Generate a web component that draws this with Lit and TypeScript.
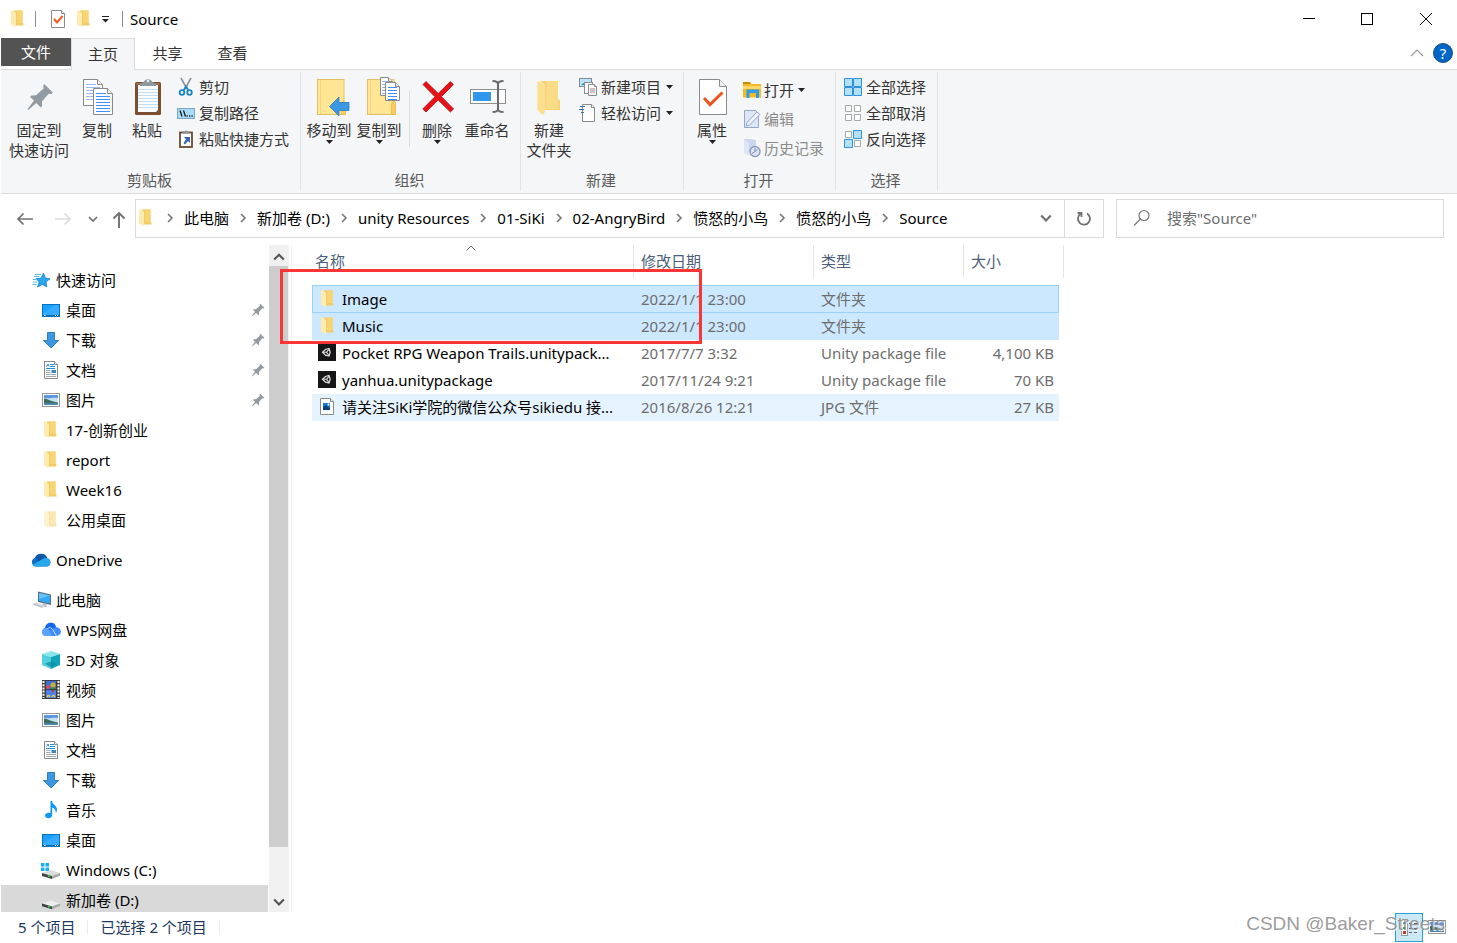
import { LitElement, html, svg, css, nothing } from "lit";
import { customElement } from "lit/decorators.js";
import { classMap } from "lit/directives/class-map.js";

type Shape = ReturnType<typeof svg>;

const draw = (w: number, h: number, shape: Shape, cls = "icon") =>
  html`<svg class=${cls} width=${w} height=${h} viewBox="0 0 ${w} ${h}" aria-hidden="true">${shape}</svg>`;

const ruled = (x: number, y: number, w: number, n: number, step: number, color: string) =>
  Array.from({ length: n }, (_, i) => svg`<path d="M${x} ${y + i * step}h${w}" stroke=${color} stroke-width="1"/>`);

const page = (x: number, y: number, w: number, h: number, fold: number) => svg`
  <path d="M${x} ${y}h${w - fold}l${fold} ${fold}v${h - fold}h${-w}z" fill="#fff" stroke="#8a8a8a"/>
  <path d="M${x + w - fold} ${y}v${fold}h${fold}" fill="#f0f0f0" stroke="#8a8a8a"/>`;

const pinShape = svg`<path d="M10.3 33.4L17 24.6 13 20.9 14.5 19.6 19 19.3 26.6 12.4 26.2 9.4 27.5 8.3 35.8 16.6 34.6 17.9 31.7 17.7 25 25.2 25.2 30 23.8 31.4 19.3 27 11.6 33.7z" fill="#919ba1"/>`;

/* Small 20px glyphs shared by the sidebar, the file list and the bars */
const folder20 = svg`
  <path d="M6 1.500h8.500v12.500l1 .5v2H6z" fill="#f3cb66"/>
  <path d="M9 1.500h5.500v12.500h-5.500z" fill="#f7d573"/>
  <path d="M3 1.500H5l3 2.500v14L3 15.800z" fill="#fdebb0"/>`;

const glyphs: Record<string, Shape> = {
  folder: folder20,
  folderPale: svg`<g opacity=".55">${folder20}</g>`,
  star: svg`
    <path d="M12.500 3l1.800 5 4.700.8-3.900 3 .6 5.200-4.200-2.600L6.500 17l1.700-5L5 8.600l5-.4z" fill="#2aa5f0" stroke="#1583c8" stroke-width=".8"/>
    <path d="M4 4.500h6M3 6.500h5M2 9.500h3M2 12h4.500M1.500 14.500h4" stroke="#5cbcf4" stroke-width="1"/>`,
  desktop: svg`
    <rect x="1.500" y="4.500" width="17" height="12" fill="#1ca1fb" stroke="#0672bd"/>
    <path d="M2 15v-2L15 5h3v10z" fill="#35abff"/>
    <path d="M2 15.500h16" stroke="#0672bd"/><path d="M3 15.500h1.500M14 15.500h1M16 15.500h1" stroke="#fff"/>`,
  download: svg`<path d="M6.500 2.500h7v8h4L10 18 2.500 10.500h4z" fill="#3c98e3" stroke="#2b7dc2"/>`,
  document: svg`
    ${page(3.5, 1.5, 13, 17, 3)}
    <path d="M5.500 6.500l1.500-2.500 1 2.500M9 4.500h4M9 6.500h5M5 8.500h9" stroke="#1e8fd8" stroke-width="1" fill="none"/>
    <rect x="10.500" y="10" width="4.500" height="3" fill="#3d88b8"/>
    <path d="M5 10.500h4.500M5 12.500h4.500M5 14.500h10M5 16.500h10" stroke="#a4aab0"/>`,
  picture: svg`
    <rect x="1.500" y="3.500" width="17" height="13" fill="#fff" stroke="#959595"/>
    <rect x="3" y="5" width="14" height="10" fill="#c3e0f7"/>
    <path d="M3 5h14v3c-4-1-9 1-14 0z" fill="#5c95e0"/>
    <path d="M3 8.500c3 0 7 3 14 4V14H3z" fill="#3f6b5b"/>
    <path d="M3 13h14v2H3z" fill="#4a86b0"/>`,
  cloud: svg`
    <path d="M4.500 16.500a4.500 4.500 0 0 1-.4-8.700A6.600 6.600 0 0 1 16.200 8.300 4.200 4.200 0 0 1 16 16.500z" fill="#0f6fc9"/>
    <path d="M4 7.800A6.600 6.600 0 0 1 16.200 8L8.500 12z" fill="#0a57a8"/>
    <path d="M1.500 15L12 8.700c2-.8 3.500-.6 4.200-.4A4.200 4.200 0 0 1 16 16.500H4.500c-1.400 0-2.400-.6-3-1.500z" fill="#28a8ea"/>`,
  computer: svg`
    <path d="M7 1.500l13 3v10.500l-13-3z" fill="#5a6b78"/>
    <path d="M8 3l11 2.500v8L8 11z" fill="#31a8f5"/>
    <path d="M8 3l11 2.500L8 9z" fill="#66c3fb"/>
    <path d="M12 13l4 1-1 1.700 1.500 1-3 .6-3-1z" fill="#b6bec4"/>
    <path d="M.5 14.200l4.500-1.600 9.500 3.200-3.500 2.200z" fill="#d3d8dc"/><path d="M3 14.500l8 2.500" stroke="#a4acb2" stroke-width=".7"/>`,
  wps: svg`
    <path d="M5 16a4.200 4.200 0 0 1-.8-8.200C5 1.500 14 1 15 7.300a4.300 4.300 0 0 1 1 8.700z" fill="#3c8dff"/>
    <path d="M4.200 7.700C5 1.500 14 1 15 7.200L9 10z" fill="#1668ee"/>
    <path d="M5 16h6L7 8.500c-2.500-1-5.800.5-6 3.700C1 14.500 2.700 16 5 16z" fill="#5ea3ff"/>
    <path d="M6.500 8.500c2.500-1.500 4.500-.5 5.500 1.500l3.500 6" fill="none" stroke="#d7e8ff" stroke-width=".9"/>`,
  cube: svg`
    <path d="M1 4l9-3 9 3-9 3z" fill="#8ae4ec"/>
    <path d="M1 4l9 3v12l-9-4z" fill="#4fd0dc"/>
    <path d="M19 4l-9 3v12l9-4z" fill="#12a5b8"/>
    <path d="M4 13.500l6-2 6 2-6 4z" fill="#0c8ba4" opacity=".7"/>`,
  video: svg`
    <rect x="1" y="0" width="18" height="19" fill="#3d3d3d"/>
    <path d="M2.500 1v17M17.500 1v17" stroke="#fff" stroke-width="2" stroke-dasharray="2 1.200"/>
    <rect x="5" y="1" width="10" height="8" fill="#3f6fd8"/><rect x="5" y="10" width="10" height="8" fill="#4a80e8"/>
    <circle cx="12" cy="5" r="2.600" fill="#c8b02c"/><path d="M5 5.500h4v3H5z" fill="#d8486a"/><path d="M10 7.500h5V9h-5z" fill="#2d8a38"/>
    <path d="M10 10h3l-1 3z" fill="#c23a2a"/><path d="M6 17c1-2 2-2 3 0M11 17c1-2 2-2 3 0" stroke="#f0d03c" stroke-width="1.500" fill="none"/>`,
  music: svg`<path d="M9.500 1h1.700c0 3.500 4.800 4.500 4.800 8.500 0 1.500-.6 2.800-1.300 3.600.4-3-1.200-4.600-3.500-5.600v7.300c0 2-1.700 3.400-3.700 3.400S4 17.200 4 15.700s1.600-2.900 3.500-2.900c.8 0 1.500.2 2 .4z" fill="#0c98f6"/>`,
  driveC: svg`
    <path d="M0 3h3.500v3.500H0zM4.500 3H8v3.500H4.500zM0 7.500h3.500V11H0zM4.500 7.500H8V11H4.500z" fill="#12b0ee"/>
    <path d="M1 13l9-3 9 3-8 3z" fill="#dcdcdc"/><path d="M1 13l10 3v3L1 16z" fill="#3f4444"/><path d="M11 16l8-3v2.800L11 19z" fill="#a9abab"/><path d="M7 15.800l2 .7" stroke="#35d435" stroke-width="1.800"/>`,
  driveD: svg`
    <path d="M1 13.500l9-3 9 3-8 3z" fill="#ededed"/><path d="M1 13.500l10 3v2.800l-10-3z" fill="#3f4444"/><path d="M11 16.500l8-3v2.500l-8 3.300z" fill="#a9abab"/><path d="M7 16.300l2 .7" stroke="#35d435" stroke-width="1.800"/>`,
  unity: svg`
    <rect x="0" y="1" width="18" height="17" fill="#161616"/>
    <path d="M4.500 9.300L7.500 6.500l3.500-1 1.200 3.800-1.200 3.800-3.500-1z" fill="none" stroke="#e0e0e0" stroke-width="1.200"/>
    <path d="M5 9.300h3.500l2.500-3M8.500 9.300l2.500 3" stroke="#e0e0e0" stroke-width="1.100" fill="none"/>`,
  jpg: svg`
    ${page(2.500, 1.500, 13, 16, 3)}
    <rect x="5" y="6" width="7" height="7" fill="#1879cf"/><path d="M5 13v-3l3-2 3 3 1-1v3z" fill="#0b3c7b"/><circle cx="10.500" cy="7.500" r="1" fill="#fff"/>`,
  check: svg`${page(2.5, 1.5, 13, 17, 3)}<path d="M5 10l3 3.500 5.500-6.500" fill="none" stroke="#f0581f" stroke-width="2"/>`,
  cut: svg`
    <path d="M4 1l6 11M14 1L8 12" stroke="#8c959b" stroke-width="1.600"/>
    <circle cx="5" cy="15.500" r="2.300" fill="none" stroke="#1b86c8" stroke-width="1.800"/><circle cx="12.500" cy="15.500" r="2.300" fill="none" stroke="#1b86c8" stroke-width="1.800"/><path d="M6.500 13.500L9 9.500l2.500 4" stroke="#1b86c8" stroke-width="1.800" fill="none"/>`,
  path: svg`
    <rect x=".5" y="5.500" width="17" height="10" fill="#a8dcff" stroke="#7fa6bf"/>
    <path d="M3 7.500l2 6M6.500 7.500l2 6" stroke="#1a1a1a" stroke-width="1.300"/><path d="M9.500 13h1.200M12 13h1.200M14.500 13h1.200" stroke="#1a1a1a" stroke-width="1.400"/>`,
  shortcut: svg`
    <rect x="3" y="3.500" width="12" height="14.500" fill="#fff" stroke="#6b4a2f" stroke-width="1.800"/>
    <path d="M5.500 4.500V2.500H8L9 1l1 1.500h2.500v2z" fill="#8a9096"/>
    <path d="M7 8h6v6l-2-2-3 3.500L6.500 14 9 10.500z" fill="#2f67b0"/>`,
  newItem: svg`
    <rect x=".5" y="1.500" width="12" height="8" fill="#bfe3f8" stroke="#7c8c96"/><path d="M2 8l4-3 5 3z" fill="#2f8bb0"/>
    <rect x="5.500" y="5.500" width="8" height="11" fill="#fff" stroke="#8a8a8a"/>
    ${page(9.5, 7.5, 8, 11, 2)}<path d="M11 11.500h5M11 13.500h5M11 15.500h5" stroke="#eab4a8"/><path d="M11 12.500h5M11 14.500h5" stroke="#a8c8ee"/>`,
  easy: svg`${page(3.5, 1.5, 12, 17, 3)}<path d="M1 3.500h5M0 6.500h5M2 9.500h3" stroke="#2e6da8" stroke-width="1.200"/>`,
  open: svg`
    <path d="M0 4V2h6l2 2h10v13.500H0z" fill="#f5b921"/><path d="M0 2h7l1 2H0z" fill="#c98c0a"/><path d="M0 6h18v3H0z" fill="#ffd766"/>
    <path d="M3.500 18V9.500h12.500V18h-3v-5H6.500v5z" fill="#2f9bea"/>`,
  edit: svg`<path d="M1.500 1.500h11l3 3v14h-14z" fill="#dce6f5" stroke="#93a7c8"/><path d="M3.500 14L14 3 17 5.500 6.500 16l-3 1z" fill="#edf2fa" stroke="#93a7c8"/>`,
  history: svg`<path d="M1 1h5l7 1v13H6l-5-1z" fill="#c9d6ee"/><path d="M1 1l5 4v13l-5-3z" fill="#dde6f7"/><circle cx="12" cy="13.500" r="5" fill="#dbe3f2" stroke="#8b9cc0" stroke-width="1.400"/><path d="M12 10V13.500l-3 2M12 13.500l2.500-2" stroke="#7f90b5" fill="none"/>`,
  selectAll: svg`<path d="M.5 1.500h8v8h-8zM9.500 1.500h8v8h-8zM.5 10.500h8v8h-8zM9.500 10.500h8v8h-8z" fill="#b5e0fc" stroke="#2f92de"/>`,
  selectNone: svg`<path d="M1.500 2.500h6v6h-6zM10.500 2.500h6v6h-6zM1.500 11.500h6v6h-6zM10.500 11.500h6v6h-6z" fill="#fff" stroke="#a8a8a8"/>`,
  invert: svg`<path d="M1.500 2.500h6v6h-6zM10.500 11.500h6v6h-6z" fill="#fff" stroke="#a8a8a8"/><path d="M9.500 1.500h8v8h-8zM.5 10.500h8v8h-8z" fill="#b5e0fc" stroke="#2f92de"/>`,
  details: svg`<rect x="2.500" y="2.500" width="6" height="16" fill="#fff" stroke="#9a9a9a"/>
    <path d="M4 5h3v2H4z" fill="#5a9"/><path d="M4 10h3v2H4z" fill="#393"/><path d="M4 14h3v3H4z" fill="#c33"/>
    <path d="M10 6.500h3M15 6.500h3M10 11.500h3M15 11.500h3M10 15.500h3M15 15.500h3" stroke="#666"/>`,
};

const glyph = (name: string) => draw(20, 20, glyphs[name]);

/* 44px ribbon artwork */
const bigFolder = svg`
  <rect x="10.500" y="3.500" width="26.500" height="35" fill="#ffe594" stroke="#e4c069"/>
  <path d="M13.500 4v34" stroke="#f6d67c"/>
  <path d="M34.500 38.500V28l2-3 2 1.500v12z" fill="#f8cd5b" stroke="#e4b84f" stroke-width=".8"/>`;

const art: Record<string, Shape> = {
  pin: pinShape,
  copy: svg`
    ${page(8.5, 3.5, 19, 26, 5)}${ruled(11, 8.5, 10, 1, 3, "#9cb8f0")}${ruled(11, 11.5, 14, 5, 3, "#9cb8f0")}
    ${page(18.5, 12.5, 19, 26, 5)}${ruled(21, 17.5, 10, 1, 3, "#3f8cff")}${ruled(21, 20.5, 14, 6, 3, "#3f8cff")}`,
  paste: svg`
    <rect x="10" y="6" width="26" height="33" rx="1.500" fill="#7b4f31"/><path d="M11 7h24v2H11z" fill="#996a47"/>
    <path d="M13 9h20v25l-2 2H13z" fill="#fbfcfd"/>${ruled(13, 13.5, 20, 7, 3, "#c3ddf0")}
    <path d="M15 10V7.500l4-1.500c.5-3.800 7.500-3.800 8 0l4 1.500V10z" fill="#8f979c"/><circle cx="23" cy="5" r="1.300" fill="#e8ecee"/>`,
  moveTo: svg`${bigFolder}<path d="M22.500 30.500L32 21v5.500h10v8H32V40z" fill="#3c98e3" stroke="#2b7dc2" stroke-width=".8"/>`,
  copyTo: svg`${bigFolder}
    ${page(23.5, 1.5, 12, 18, 4)}${ruled(25, 5.5, 6, 5, 3, "#8fb0e8")}
    ${page(28.5, 6.5, 14, 18, 4)}${ruled(31, 11.5, 9, 5, 3, "#3f8cff")}`,
  remove: svg`<path d="M11 5.500L23.200 17.500 35.400 5.500l3 3L26.400 20.700l12.200 12.200-3.200 3.100L23.200 24 11 36l-3.200-3.100L20 20.700 8 8.500z" fill="#e81216" stroke="#a80d10" stroke-width=".8"/>`,
  rename: svg`
    <rect x="5.500" y="13.500" width="35" height="14" fill="#fff" stroke="#8f8f8f"/><rect x="8" y="16" width="18" height="9" fill="#3097ec"/>
    <path d="M27.500 5c3 0 5.500.5 5.500 3v25c0 2.500-2.500 3-5.500 3M38.500 5C35.500 5 33 5.500 33 8v25c0 2.500 2.500 3 5.500 3" fill="none" stroke="#6a6a6a" stroke-width="2"/>`,
  newFolder: svg`
    <path d="M14 5h17v18l2 1.500V34H14z" fill="#f8d274"/><path d="M20 5h11v28H18z" fill="#fadb86"/>
    <path d="M10.500 5h2l5.500 4v26l-1 4-6.500-5z" fill="#fdeaa9"/><path d="M10.500 5l2 2 5.500 3v25l-2 4-5.500-5z" fill="#fbdf8f"/>`,
  properties: svg`${page(9.5, 3.5, 27, 35, 7)}<path d="M14 22l6 6.500L32.500 16.500" fill="none" stroke="#f0521c" stroke-width="3"/>`,
};

const caret = draw(7, 4, svg`<path d="M0 0h7L3.500 4z" fill="#222"/>`, "caret");
const chevron = (dir: "up" | "down" | "right", w = 10, color = "#777", weight = 2) => {
  const d = { up: "M1 8l4-4 4 4", down: "M1 3l4 4 4-4", right: "M3 1l4 4-4 4" }[dir];
  return html`<svg class="icon" width=${w} height=${w} viewBox="0 0 10 10" aria-hidden="true"><path d=${d} fill="none" stroke=${color} stroke-width=${weight}/></svg>`;
};

const big = (name: string, lines: string[], drop = false) => html`
  <button class="big">${draw(44, 44, art[name])}${lines.map((l) => html`<span>${l}</span>`)}${drop ? caret : nothing}</button>`;

const small = (name: string, label: string, drop = false, disabled = false) => html`
  <button class="small" ?disabled=${disabled}>${glyph(name)}<span>${label}</span>${drop ? caret : nothing}</button>`;

interface Place { icon: string; label: string; top?: boolean; gap?: boolean; pinned?: boolean; current?: boolean; }

const places: Place[] = [
  { icon: "star", label: "快速访问", top: true },
  { icon: "desktop", label: "桌面", pinned: true },
  { icon: "download", label: "下载", pinned: true },
  { icon: "document", label: "文档", pinned: true },
  { icon: "picture", label: "图片", pinned: true },
  { icon: "folder", label: "17-创新创业" },
  { icon: "folder", label: "report" },
  { icon: "folder", label: "Week16" },
  { icon: "folderPale", label: "公用桌面" },
  { icon: "cloud", label: "OneDrive", top: true, gap: true },
  { icon: "computer", label: "此电脑", top: true, gap: true },
  { icon: "wps", label: "WPS网盘" },
  { icon: "cube", label: "3D 对象" },
  { icon: "video", label: "视频" },
  { icon: "picture", label: "图片" },
  { icon: "document", label: "文档" },
  { icon: "download", label: "下载" },
  { icon: "music", label: "音乐" },
  { icon: "desktop", label: "桌面" },
  { icon: "driveC", label: "Windows (C:)" },
  { icon: "driveD", label: "新加卷 (D:)", current: true },
];

const crumbs = ["此电脑", "新加卷 (D:)", "unity Resources", "01-SiKi", "02-AngryBird", "愤怒的小鸟", "愤怒的小鸟", "Source"];

const files = [
  { icon: "folder", name: "Image", date: "2022/1/1 23:00", kind: "文件夹", size: "", state: "focused" },
  { icon: "folder", name: "Music", date: "2022/1/1 23:00", kind: "文件夹", size: "", state: "selected" },
  { icon: "unity", name: "Pocket RPG Weapon Trails.unitypack...", date: "2017/7/7 3:32", kind: "Unity package file", size: "4,100 KB", state: "" },
  { icon: "unity", name: "yanhua.unitypackage", date: "2017/11/24 9:21", kind: "Unity package file", size: "70 KB", state: "" },
  { icon: "jpg", name: "请关注SiKi学院的微信公众号sikiedu 接...", date: "2016/8/26 12:21", kind: "JPG 文件", size: "27 KB", state: "hovered" },
];

@customElement("app-root")
export class AppRoot extends LitElement {
  static styles = css`
    :host { display: flex; flex-direction: column; height: 100vh; box-sizing: border-box; padding-left: 1px; position: relative; overflow: hidden; background: #fff; color: #000;
      font: 400 15px/20px "Noto Sans", "Noto Sans CJK SC", sans-serif; }
    * { box-sizing: border-box; }
    button, input { font: inherit; color: inherit; background: none; border: 0; padding: 0; margin: 0; outline: 0; }
    a { color: inherit; text-decoration: none; }
    .icon, .caret { display: block; flex: none; }
    .titlebar { display: flex; align-items: center; height: 38px; flex: none; }
    .quick { display: flex; align-items: center; padding-left: 7px; flex: 1; }
    .quick h1 { font-size: 15px; font-weight: inherit; margin: 0 0 0 7px; }
    .rule { width: 1px; height: 16px; background: #8c8c8c; }
    .quick .first { margin: 0 13px 0 7px; }
    .quick .second { margin-left: 12px; }
    .quick .gap { margin-left: 5px; }
    .quick .more { margin-left: 7px; }
    .winbtn { width: 58px; height: 38px; display: grid; place-items: center; }
    .winbtn:last-child { width: 60px; margin-right: 1px; }
    .tabs { display: flex; height: 32px; flex: none; border-bottom: 1px solid #dadbdc; align-items: stretch; }
    .tab { width: 65px; padding-bottom: 2px; color: #333; }
    .tab.file { width: 70px; height: 28px; padding: 0; background: #535353; color: #fff; }
    .tab.active { width: 64px; height: 32px; background: #f5f6f7; border: 1px solid #dadbdc; border-bottom: 0; }
    .tools { margin-left: auto; display: flex; align-items: center; gap: 9px; padding: 0 4px 2px 0; }
    .help { width: 20px; height: 20px; border-radius: 50%; background: #0066c8; border: 1px solid #234d78; color: #fff; line-height: 18px; text-align: center; }
    .ribbon { display: flex; height: 124px; flex: none; background: #f5f6f7; border-bottom: 1px solid #dadbdc; color: #333; padding: 2px 0; }
    .group { display: flex; flex-direction: column; border-right: 1px solid #e2e3e4; }
    .body { display: flex; flex: 1; padding: 4px 8px 0 3px; }
    .clip .body { padding: 4px 11px 0 5px; }
    .create .body { padding: 4px 10px 0 3px; }
    .inspect .body { padding: 4px 11px 0 3px; }
    .select .body { padding: 4px 11px 0 8px; }
    .group h2 { margin: 0; font-size: 15px; line-height: 20px; font-weight: inherit; color: #5a5a5a; text-align: center; padding: 0 2px 1px 0; }
    .big { display: flex; flex-direction: column; align-items: center; width: 50px; white-space: nowrap; align-self: flex-start; }
    .clip .big:first-child { width: 66px; }
    .divider { width: 1px; height: 56px; background: #dcdddf; margin: 15px 2px 0 5px; }
    .stack { display: flex; flex-direction: column; padding-left: 5px; margin-top: -2px; }
    .select .stack { padding-left: 0; }
    .small { display: flex; align-items: center; height: 26px; gap: 2px; white-space: nowrap; }
    .small .caret { margin-left: 3px; }
    .small:disabled { color: #8b8b8b; }
    .inspect .stack { gap: 3px; padding: 3px 0 0 6px; }
    .inspect .small { gap: 1px; }
    .address { display: flex; align-items: center; height: 51px; flex: none; padding: 0 13px 2px 0; }
    .history { display: flex; align-items: center; width: 134px; padding-left: 14px; }
    .history .forward { margin-left: 18px; }
    .history .recent { margin-left: 15px; }
    .history .parent { margin-left: 11px; }
    .path { display: flex; align-items: center; flex: 1; height: 39px; border: 1px solid #d9d9d9; padding-bottom: 2px; min-width: 0; }
    .crumb { display: flex; align-items: center; white-space: nowrap; }
    .crumb .icon { margin: 0 9px; }
    .path .expand { margin: 0 12px 0 auto; }
    .refresh { width: 40px; height: 39px; border: 1px solid #d9d9d9; margin-left: -1px; display: grid; place-items: center; }
    .search { display: flex; align-items: center; width: 328px; height: 39px; border: 1px solid #d9d9d9; margin-left: 12px; padding: 0 0 2px 15px; gap: 15px; }
    .search input { flex: 1; min-width: 0; }
    .search input::placeholder { color: #6d6d6d; opacity: 1; }
    .content { display: flex; flex: 1; min-height: 0; }
    .sidebar { width: 267px; overflow: hidden; padding-top: 20px; flex: none; }
    .place { display: flex; align-items: center; height: 30px; gap: 5px; padding: 0 3px 0 40px; }
    .place.top { padding-left: 30px; }
    .place.gap { margin-top: 10px; }
    .place.current { background: #d9d9d9; }
    .place .pin { margin-left: auto; }
    .scrollbar { display: flex; flex-direction: column; width: 20px; margin-left: 1px; background: #f0f0f0; flex: none; }
    .scrollbar button { height: 21px; display: grid; place-items: center; margin-right: 1px; }
    .thumb { flex: 93; background: #cdcdcd; margin-right: 1px; }
    .track { flex: 7; }
    .main { flex: 1; border-left: 1px solid #f2f2f2; margin-left: 2px; padding-left: 20px; position: relative; }
    table { border-collapse: separate; border-spacing: 0; table-layout: fixed; width: 752px; }
    .c-name { width: 322px; } .c-date { width: 180px; } .c-kind { width: 150px; } .c-size { width: 95px; } .c-end { width: 5px; }
    th { font-weight: inherit; text-align: left; padding: 0; height: 40px; vertical-align: top; color: #4c607a; position: relative; }
    th div { height: 33px; line-height: 32px; padding-left: 7px; border-right: 1px solid #e5e5e5; }
    th.name div { padding-left: 3px; }
    th.size div { border: 0; }
    th.end div { padding: 0; }
    .sort { position: absolute; top: 0; left: 50%; margin-left: -7px; }
    td { height: 27px; padding: 0 0 1px 7px; color: #6d6d6d; white-space: nowrap; border: 0 solid #99d1ff; }
    td.name { color: #000; padding-left: 6px; }
    td.size { text-align: right; padding-right: 5px; }
    .cell { display: flex; align-items: center; gap: 4px; }
    .focused td:not(.end), .selected td:not(.end) { background: #cce8ff; }
    .hovered td:not(.end) { background: #e5f3ff; }
    .focused td:not(.end) { height: 28px; border-width: 1px 0; padding-bottom: 0; }
    .focused td.name { border-left-width: 1px; padding-left: 5px; }
    .focused td.size { border-right-width: 1px; }
    .marker { position: absolute; left: -12px; top: 24px; width: 422px; height: 75px; border: 3px solid #fa3535; pointer-events: none; }
    .status { display: flex; align-items: center; height: 31px; flex: none; padding: 0 0 1px 17px; color: #1e395b; }
    .status .bar { width: 1px; height: 14px; background: #ececec; margin: 0 12px; }
    .views { margin-left: auto; display: flex; align-items: center; padding-right: 10px; gap: 4px; }
    .views button { display: grid; place-items: center; height: 29px; }
    .views .on { width: 28px; background: #cbe8f6; border: 1px solid #26a0da; }
    .credit { position: absolute; right: 12px; bottom: 8px; font: 19px/22px "Liberation Sans", Arial, sans-serif; color: rgba(130, 130, 130, 0.8); text-shadow: 1px 1px 0 rgba(255, 255, 255, 0.8); pointer-events: none; }
  `;

  render() {
    return html`
      <header class="titlebar">
        <div class="quick">
          ${glyph("folder")}<span class="rule first"></span>
          ${glyph("check")}<span class="gap"></span>${glyph("folder")}
          <svg class="icon more" width="9" height="8" viewBox="0 0 9 8" aria-hidden="true"><path d="M1 1.500h7" stroke="#222"/><path d="M1 4h7L4.500 7.500z" fill="#222"/></svg>
          <span class="rule second"></span><h1>Source</h1>
        </div>
        <button class="winbtn" aria-label="最小化">${draw(12, 12, svg`<path d="M0 5.500h12" stroke="#000"/>`)}</button>
        <button class="winbtn" aria-label="最大化">${draw(12, 12, svg`<rect x=".5" y=".5" width="11" height="11" fill="none" stroke="#000"/>`)}</button>
        <button class="winbtn" aria-label="关闭">${draw(12, 12, svg`<path d="M0 0l12 12M12 0L0 12" stroke="#000"/>`)}</button>
      </header>
      <nav class="tabs">
        <button class="tab file">文件</button><button class="tab active">主页</button>
        <button class="tab">共享</button><button class="tab">查看</button>
        <div class="tools">
          <button aria-label="折叠功能区">${draw(14, 8, svg`<path d="M1 7l6-6 6 6" fill="none" stroke="#999" stroke-width="1.200"/>`)}</button>
          <button class="help" aria-label="帮助">?</button>
        </div>
      </nav>
      <section class="ribbon">
        <div class="group clip">
          <div class="body">
            ${big("pin", ["固定到", "快速访问"])}${big("copy", ["复制"])}${big("paste", ["粘贴"])}
            <div class="stack">${small("cut", "剪切")}${small("path", "复制路径")}${small("shortcut", "粘贴快捷方式")}</div>
          </div>
          <h2>剪贴板</h2>
        </div>
        <div class="group">
          <div class="body">
            ${big("moveTo", ["移动到"], true)}${big("copyTo", ["复制到"], true)}<span class="divider"></span>
            ${big("remove", ["删除"], true)}${big("rename", ["重命名"])}
          </div>
          <h2>组织</h2>
        </div>
        <div class="group create">
          <div class="body">
            ${big("newFolder", ["新建", "文件夹"])}
            <div class="stack">${small("newItem", "新建项目", true)}${small("easy", "轻松访问", true)}</div>
          </div>
          <h2>新建</h2>
        </div>
        <div class="group inspect">
          <div class="body">
            ${big("properties", ["属性"], true)}
            <div class="stack">${small("open", "打开", true)}${small("edit", "编辑", false, true)}${small("history", "历史记录", false, true)}</div>
          </div>
          <h2>打开</h2>
        </div>
        <div class="group select">
          <div class="body">
            <div class="stack">${small("selectAll", "全部选择")}${small("selectNone", "全部取消")}${small("invert", "反向选择")}</div>
          </div>
          <h2>选择</h2>
        </div>
      </section>
      <section class="address">
        <div class="history">
          <button aria-label="返回">${draw(20, 20, svg`<path d="M18 10H3M8.500 4.500L3 10l5.500 5.500" fill="none" stroke="#707070" stroke-width="1.700"/>`)}</button>
          <button class="forward" aria-label="前进">${draw(20, 20, svg`<path d="M2 10h15M11.500 4.500L17 10l-5.500 5.500" fill="none" stroke="#dcdcdc" stroke-width="1.700"/>`)}</button>
          <button class="recent" aria-label="最近浏览的位置">${chevron("down", 10, "#707070", 1.7)}</button>
          <button class="parent" aria-label="上移">${draw(20, 20, svg`<path d="M10 19V4M4.500 9.500L10 4l5.500 5.500" fill="none" stroke="#707070" stroke-width="1.900"/>`)}</button>
        </div>
        <div class="path">
          ${glyph("folder")}
          ${crumbs.map((c) => html`<span class="crumb">${chevron("right", 10, "#777", 1.6)}<a href="#">${c}</a></span>`)}
          <button class="expand" aria-label="展开">${chevron("down", 12, "#707070", 1.8)}</button>
        </div>
        <button class="refresh" aria-label="刷新">${draw(16, 16, svg`<path d="M11 2.500a6 6 0 1 1-6.500.3M1.500 2h4v4" fill="none" stroke="#707070" stroke-width="1.800"/>`)}</button>
        <label class="search">
          ${draw(20, 20, svg`<circle cx="12" cy="7.500" r="5" fill="none" stroke="#777" stroke-width="1.200"/><path d="M8.500 11L2 17.500" stroke="#777" stroke-width="1.300"/>`)}
          <input type="search" placeholder='搜索"Source"' aria-label="搜索" />
        </label>
      </section>
      <section class="content">
        <nav class="sidebar">
          ${places.map((p) => html`
            <a href="#" class=${classMap({ place: true, top: !!p.top, gap: !!p.gap, current: !!p.current })}>
              ${glyph(p.icon)}<span>${p.label}</span>
              ${p.pinned ? html`<svg class="icon pin" width="14" height="14" viewBox="9 7 28 28" aria-hidden="true">${pinShape}</svg>` : nothing}
            </a>`)}
        </nav>
        <div class="scrollbar">
          <button aria-label="向上滚动">${chevron("up", 12, "#555", 1.8)}</button>
          <div class="thumb"></div><div class="track"></div>
          <button aria-label="向下滚动">${chevron("down", 12, "#555", 1.8)}</button>
        </div>
        <main class="main">
          <table>
            <colgroup><col class="c-name" /><col class="c-date" /><col class="c-kind" /><col class="c-size" /><col class="c-end" /></colgroup>
            <thead>
              <tr>
                <th class="name"><div>名称</div>${draw(10, 6, svg`<path d="M.5 5.500L5 1l4.500 4.500" fill="none" stroke="#666"/>`, "sort")}</th>
                <th><div>修改日期</div></th><th><div>类型</div></th><th class="size"><div>大小</div></th><th class="end"><div></div></th>
              </tr>
            </thead>
            <tbody>
              ${files.map((f) => html`
                <tr class=${f.state}>
                  <td class="name"><div class="cell">${glyph(f.icon)}<span>${f.name}</span></div></td>
                  <td>${f.date}</td><td>${f.kind}</td><td class="size">${f.size}</td><td class="end"></td>
                </tr>`)}
            </tbody>
          </table>
          <div class="marker"></div>
        </main>
      </section>
      <footer class="status">
        <span>5 个项目</span><span class="bar"></span><span>已选择 2 个项目</span><span class="bar"></span>
        <div class="views">
          <button class="on" aria-label="详细信息">${glyph("details")}</button>
          <button aria-label="大图标">${glyph("picture")}</button>
        </div>
      </footer>
      <div class="credit">CSDN @Baker_Streets</div>
    `;
  }
}
